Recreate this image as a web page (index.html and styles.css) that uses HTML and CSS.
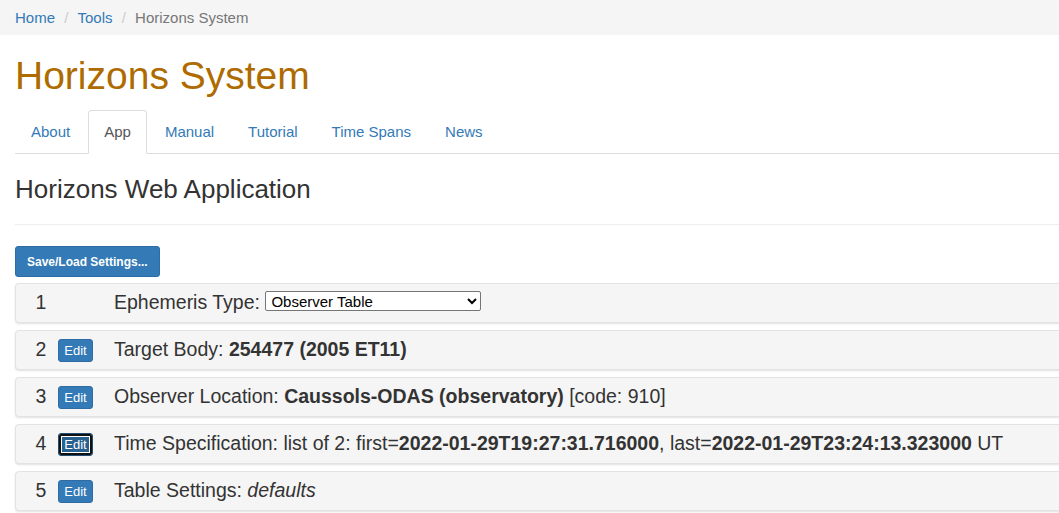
FILE: index.html
```html
<!DOCTYPE html>
<html lang="en">
<head>
    <meta charset="UTF-8">
    <title>Horizons System</title>
    <link rel="stylesheet" href="styles.css">
</head>
<body>
    <ol class="breadcrumb">
        <li><a href="#">Home</a></li>
        <li><a href="#">Tools</a></li>
        <li class="active">Horizons System</li>
    </ol>

    <div class="container">
        <h1 class="page-title">Horizons System</h1>

        <ul class="nav-tabs">
            <li><a href="#">About</a></li>
            <li class="active"><a href="#">App</a></li>
            <li><a href="#">Manual</a></li>
            <li><a href="#">Tutorial</a></li>
            <li><a href="#">Time Spans</a></li>
            <li><a href="#">News</a></li>
        </ul>

        <h3 class="app-title">Horizons Web Application</h3>
        <hr>

        <button class="btn btn-sm">Save/Load Settings...</button>

        <!-- settings rows -->
        <div class="setting">
            <span class="num">1</span>
            <span class="edit-cell"></span>
            <span class="label">Ephemeris Type:
                <select class="type-select">
                    <option>Observer Table</option>
                    <option>Vector Table</option>
                    <option>Osculating Orbital Elements</option>
                </select>
            </span>
        </div>
        <div class="setting">
            <span class="num">2</span>
            <span class="edit-cell"><button class="btn btn-xs">Edit</button></span>
            <span class="label">Target Body: <b>254477 (2005 ET11)</b></span>
        </div>
        <div class="setting">
            <span class="num">3</span>
            <span class="edit-cell"><button class="btn btn-xs">Edit</button></span>
            <span class="label">Observer Location: <b>Caussols-ODAS (observatory)</b> [code: 910]</span>
        </div>
        <div class="setting">
            <span class="num">4</span>
            <span class="edit-cell"><button class="btn btn-xs focused">Edit</button></span>
            <span class="label">Time Specification: list of 2: first=<b>2022-01-29T19:27:31.716000</b>, last=<b>2022-01-29T23:24:13.323000</b> UT</span>
        </div>
        <div class="setting">
            <span class="num">5</span>
            <span class="edit-cell"><button class="btn btn-xs">Edit</button></span>
            <span class="label">Table Settings: <i>defaults</i></span>
        </div>
    </div>
</body>
</html>
```

FILE: styles.css
```css
html, body { overflow: hidden; }
body { margin: 0; font-family: "Liberation Sans", Arial, sans-serif; font-size: 15px; line-height: 1.42857; color: #333; background: #fff; }
a { color: #337ab7; text-decoration: none; }

.breadcrumb { list-style: none; margin: 0; padding: 7px 15px; background-color: #f5f5f5; }
.breadcrumb li { display: inline; }
.breadcrumb li + li:before { content: "/\00a0"; padding: 0 5px; color: #ccc; }
.breadcrumb .active { color: #777; }

.container { padding: 0 15px; min-width: 1100px; }
.page-title { font-size: 39px; font-weight: normal; line-height: 1.1; color: #ad6b00; margin: 20px 0 12px; }

.nav-tabs { list-style: none; margin: 0; padding: 0; display: flex; border-bottom: 1px solid #ddd; }
.nav-tabs li { margin-bottom: -1px; }
.nav-tabs li a { display: block; margin-right: 2px; padding: 10px 15px; border: 1px solid transparent; border-radius: 4px 4px 0 0; }
.nav-tabs li.active a { color: #555; background: #fff; border-color: #ddd #ddd transparent; }

.app-title { font-size: 26px; font-weight: normal; line-height: 1.1; margin: 21px 0 0; }
hr { border: 0; border-top: 1px solid #eee; margin: 21px 0; }

.btn { font-family: inherit; color: #fff; background-color: #337ab7; border: 1px solid #2e6da4; border-radius: 3px; cursor: pointer; }
.btn-sm { font-size: 12px; font-weight: bold; line-height: 1.5; padding: 5px 11px; height: 31px; margin-bottom: 6px; display: block; }
.btn-xs { font-size: 13px; line-height: 1.5; padding: 1px 5px; height: 23px; width: 35px; display: block; }
.btn-xs.focused { background-color: #286090; border-color: #204d74; box-shadow: inset 0 0 0 2px #111, inset 0 0 0 3px #fff; }

.setting { display: flex; align-items: center; height: 38px; margin-bottom: 7px; padding-left: 15px; background-color: #f5f5f5; border: 1px solid #e3e3e3; border-radius: 4px; box-shadow: 0 1px 2px rgba(0,0,0,0.12); font-size: 19.5px; }
.setting .num { width: 20px; text-align: center; }
.setting .edit-cell { width: 35px; margin: 0 21px 0 7px; }
.setting .label { white-space: nowrap; }
.type-select { width: 216px; height: 20px; padding: 0 0 0 1px; font-family: "Liberation Sans", Arial, sans-serif; font-size: 15px; color: #000; background: #fff; border: 1px solid #767676; border-radius: 2px; vertical-align: 2px; }
```
